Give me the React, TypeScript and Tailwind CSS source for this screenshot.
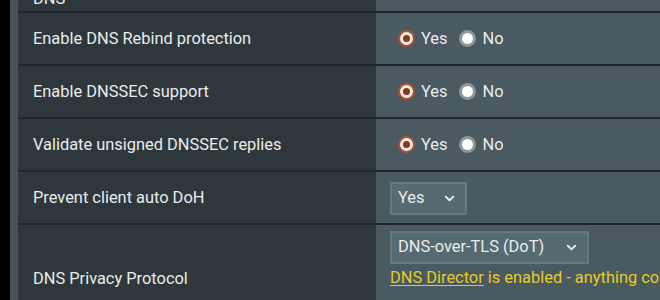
import React from "react";
import { ChevronDown } from "lucide-react";

const Radio: React.FC<{ checked?: boolean; label: string }> = ({ checked, label }) => (
  <label className="flex items-center gap-[6px]">
    {checked ? (
      <span className="flex h-[17px] w-[17px] items-center justify-center rounded-full border-[2px] border-[#b0502f] bg-[#f6eee8]">
        <span className="h-[7px] w-[7px] rounded-full bg-[#8e3520]" />
      </span>
    ) : (
      <span className="h-[17px] w-[17px] rounded-full border-[3px] border-[#8c969b] bg-white" />
    )}
    <span>{label}</span>
  </label>
);

const YesNo = () => (
  <div className="ml-[8px] flex items-center gap-[12px]">
    <Radio checked label="Yes" />
    <Radio label="No" />
  </div>
);

const Select: React.FC<{ value: string; width: string }> = ({ value, width }) => (
  <div
    className={`flex h-[33px] items-center justify-between border-2 border-[#68797e] bg-[#586a71] pl-[6px] pr-[8px] ${width}`}
  >
    <span>{value}</span>
    <ChevronDown size={15} strokeWidth={3} className="text-[#eef0f0]" />
  </div>
);

const Row: React.FC<{ label: string; children?: React.ReactNode }> = ({ label, children }) => (
  <div className="flex h-[53px] border-t-2 border-[#1f272a]">
    <div className="flex w-[358px] shrink-0 items-center bg-[#2e373b] pt-[1px] pl-[15px]">{label}</div>
    <div className="flex flex-1 items-center bg-[#4a5a60] pt-[1px] pl-[14px]">{children}</div>
  </div>
);

export default function App() {
  return (
    <div
      className="flex h-[300px] w-[660px] overflow-hidden bg-black text-[16.4px] text-[#e9ecec]"
      style={{ fontFamily: "Roboto, 'Noto Sans', sans-serif" }}
    >
      <div className="w-[10px] shrink-0 bg-black" />
      <div className="w-[8px] shrink-0 bg-[#4a5358]" />
      <div className="-mt-[42px] w-[1100px] shrink-0">
        <div className="flex h-[53px]">
          <div className="flex w-[358px] shrink-0 items-end bg-[#2e373b] pb-[3px] pl-[15px] leading-[19px]">
            DNS
          </div>
          <div className="flex-1 bg-[#4a5a60]" />
        </div>
        <Row label="Enable DNS Rebind protection">
          <YesNo />
        </Row>
        <Row label="Enable DNSSEC support">
          <YesNo />
        </Row>
        <Row label="Validate unsigned DNSSEC replies">
          <YesNo />
        </Row>
        <Row label="Prevent client auto DoH">
          <Select value="Yes" width="w-[77px]" />
        </Row>
        <div className="flex h-[110px] border-t-2 border-[#1f272a]">
          <div className="flex w-[358px] shrink-0 items-center bg-[#2e373b] pl-[15px]">
            DNS Privacy Protocol
          </div>
          <div className="flex flex-1 flex-col bg-[#4a5a60] pl-[14px] pt-[6px]">
            <Select value="DNS-over-TLS (DoT)" width="w-[199px]" />
            <div className="mt-[3px] leading-[22px] text-[#e3cb2c]">
              <span className="underline underline-offset-2">DNS Director</span> is enabled - anything
              configured here will be overridden by DNS Director.
            </div>
          </div>
        </div>
      </div>
    </div>
  );
}
